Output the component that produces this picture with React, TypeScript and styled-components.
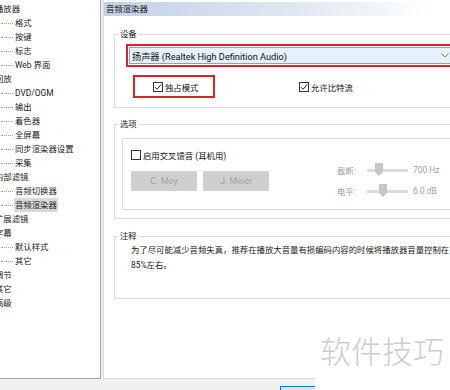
import React from "react";
import styled, { createGlobalStyle } from "styled-components";

const GlobalStyle = createGlobalStyle`
  html, body {
    margin: 0;
    padding: 0;
    background: #f0f0f0;
  }
`;

const FONT = `Roboto, "Noto Sans CJK SC", sans-serif`;

const Window = styled.div`
  position: relative;
  width: 450px;
  height: 390px;
  overflow: hidden;
  background: #f0f0f0;
  display: flex;
  flex-direction: column;
  font-family: ${FONT};
  font-size: 8.4px;
  color: #1a1a1a;
`;

const Body = styled.div`
  display: flex;
  height: 379px;
  flex: none;
`;

const Tree = styled.ul`
  box-sizing: border-box;
  width: 101px;
  flex: none;
  margin: 0;
  padding: 2px 0 0;
  list-style: none;
  background: #fff;
  border-right: 1px solid #a3a3a3;
  border-bottom: 1px solid #a3a3a3;
  overflow: hidden;
`;

const TreeRow = styled.li<{ $child?: boolean }>`
  height: 14px;
  line-height: 14px;
  display: flex;
  align-items: center;
  white-space: nowrap;
  margin-left: ${(p) => (p.$child ? "1px" : "-6px")};
  color: #222;
`;

const Connector = styled.span`
  width: 12px;
  border-top: 1px dotted #9a9a9a;
  margin-right: 1px;
`;

const TreeLabel = styled.span<{ $selected?: boolean }>`
  padding: 0 1px;
  background: ${(p) => (p.$selected ? "#d9d9d9" : "transparent")};
`;

const Main = styled.div`
  box-sizing: border-box;
  flex: 1;
  min-width: 0;
  margin-left: 2px;
  padding-top: 2px;
  display: flex;
  flex-direction: column;
  background: #fff;
  border-left: 1px solid #d6d6d6;
  border-bottom: 1px solid #d6d6d6;
  overflow: hidden;
`;

const PageTitle = styled.div`
  height: 14px;
  line-height: 14px;
  padding-left: 2px;
  color: #111;
  background: linear-gradient(to right, #c2d1e5 0%, #dfe7f1 55%, #ffffff 95%);
`;

const Group = styled.fieldset<{ $gap: number }>`
  box-sizing: border-box;
  flex: none;
  width: 370px;
  margin: ${(p) => p.$gap}px 0 0 10px;
  padding: 0;
  min-width: 0;
  border: 1px solid #dcdcdc;
`;

const Legend = styled.legend`
  margin-left: 4px;
  padding: 0 1px;
  line-height: 14px;
  color: #222;
`;

const GroupBody = styled.div<{ $h: number }>`
  height: ${(p) => p.$h}px;
  padding: 3px 0 0 11px;
  box-sizing: border-box;
`;

const RedFrame = styled.div<{ $w?: number }>`
  box-sizing: border-box;
  border: 2px solid #d9242c;
  padding: 1px;
  height: 23px;
  width: ${(p) => (p.$w ? `${p.$w}px` : "auto")};
  display: flex;
  align-items: center;
`;

const Combo = styled.div`
  flex: 1;
  height: 17px;
  box-sizing: border-box;
  border: 1px solid #7ea6cf;
  background: #e5f1fb;
  display: flex;
  align-items: center;
  justify-content: space-between;
  padding: 0 30px 0 2px;
  color: #111;
  font-size: 9.2px;
`;

const CheckRow = styled.div`
  display: flex;
  align-items: center;
  margin: 8px 0 0 7px;
`;

const CheckItem = styled.label<{ $pad?: number }>`
  display: flex;
  align-items: center;
  gap: 2px;
  padding-left: ${(p) => p.$pad ?? 0}px;
  color: #111;
  white-space: nowrap;
`;

const Box = styled.span`
  width: 10px;
  height: 10px;
  box-sizing: border-box;
  border: 1px solid #333;
  background: #fff;
  display: inline-flex;
  align-items: center;
  justify-content: center;
`;

const Inner = styled.div`
  box-sizing: border-box;
  margin: 4px 0 0 -4px;
  height: 72px;
  border: 1px solid #dcdcdc;
  padding: 10px 0 0 8px;
  display: grid;
  grid-template-columns: 206px auto;
`;

const LeftCol = styled.div`
  display: flex;
  flex-direction: column;
  gap: 10px;
`;

const ButtonRow = styled.div`
  display: flex;
  gap: 6px;
`;

const FlatButton = styled.div`
  width: 66px;
  height: 20px;
  background: #cfcfcf;
  color: #a3a3a3;
  font-size: 9px;
  display: flex;
  align-items: center;
  justify-content: center;
`;

const RightCol = styled.div`
  display: flex;
  flex-direction: column;
  gap: 7px;
  padding-top: 14px;
`;

const SliderRow = styled.div`
  display: flex;
  align-items: center;
  height: 14px;
  color: #a0a0a0;
  white-space: nowrap;
`;

const SliderLabel = styled.span`
  width: 30px;
`;

const Track = styled.div`
  position: relative;
  width: 41px;
  height: 3px;
  background: #dcdcdc;
  margin-right: 5px;
`;

const Thumb = styled.svg<{ $at: number }>`
  position: absolute;
  top: -6px;
  left: ${(p) => p.$at}px;
`;

const NoteText = styled.div`
  padding: 0 0 0 16px;
  line-height: 15px;
  white-space: nowrap;
  color: #222;
`;

const Footer = styled.div`
  flex: 1;
  padding: 7px 0 0 280px;
`;

const OkButton = styled.div`
  width: 70px;
  height: 22px;
  box-sizing: border-box;
  border: 1px solid #0078d7;
  background: #e1e1e1;
`;

const Watermark = styled.div`
  position: absolute;
  right: 0;
  bottom: 0;
  width: 135px;
  height: 58px;
  background: #fff;
  color: #cdcdcd;
  font-family: "Noto Sans CJK SC", sans-serif;
  font-size: 31px;
  font-weight: 300;
  line-height: 36px;
  padding-left: 5px;
  box-sizing: border-box;
`;

const Check = () => (
  <svg width="8" height="8" viewBox="0 0 8 8">
    <path d="M1 4.2 L3.1 6.3 L7.2 1.4" fill="none" stroke="#222" strokeWidth="1" />
  </svg>
);

const Checkbox: React.FC<{ checked?: boolean; label: string; pad?: number }> = ({
  checked,
  label,
  pad,
}) => (
  <CheckItem $pad={pad}>
    <Box>{checked && <Check />}</Box>
    <span>{label}</span>
  </CheckItem>
);

const Slider: React.FC<{ label: string; at: number; value: string }> = ({ label, at, value }) => (
  <SliderRow>
    <SliderLabel>{label}</SliderLabel>
    <Track>
      <Thumb $at={at} width="8" height="13" viewBox="0 0 8 13">
        <path d="M0 0 H8 V9 L4 13 L0 9 Z" fill="#c6c6c6" />
      </Thumb>
    </Track>
    <span>{value}</span>
  </SliderRow>
);

type Node = { label: string; child?: boolean; selected?: boolean };

const nodes: Node[] = [
  { label: "播放器" },
  { label: "格式", child: true },
  { label: "按键", child: true },
  { label: "标志", child: true },
  { label: "Web 界面", child: true },
  { label: "回放" },
  { label: "DVD/OGM", child: true },
  { label: "输出", child: true },
  { label: "着色器", child: true },
  { label: "全屏幕", child: true },
  { label: "同步渲染器设置", child: true },
  { label: "采集", child: true },
  { label: "内部滤镜" },
  { label: "音频切换器", child: true },
  { label: "音频渲染器", child: true, selected: true },
  { label: "扩展滤镜" },
  { label: "字幕" },
  { label: "默认样式", child: true },
  { label: "其它", child: true },
  { label: "调节" },
  { label: "其它" },
  { label: "高级" },
];

export default function App() {
  return (
    <Window>
      <GlobalStyle />
      <Body>
        <Tree>
          {nodes.map((n, i) => (
            <TreeRow key={i} $child={n.child}>
              {n.child && <Connector />}
              <TreeLabel $selected={n.selected}>{n.label}</TreeLabel>
            </TreeRow>
          ))}
        </Tree>
        <Main>
          <PageTitle>音频渲染器</PageTitle>

          <Group $gap={11}>
            <Legend>设备</Legend>
            <GroupBody $h={66}>
              <RedFrame>
                <Combo>
                  <span>扬声器 (Realtek High Definition Audio)</span>
                  <svg width="8" height="5" viewBox="0 0 8 5">
                    <path d="M0.5 0.5 L4 4 L7.5 0.5" fill="none" stroke="#777" strokeWidth="1" />
                  </svg>
                </Combo>
              </RedFrame>
              <CheckRow>
                <RedFrame $w={82}>
                  <Checkbox checked label="独占模式" pad={17} />
                </RedFrame>
                <Checkbox checked label="允许比特流" pad={84} />
              </CheckRow>
            </GroupBody>
          </Group>

          <Group $gap={9}>
            <Legend>选项</Legend>
            <GroupBody $h={87}>
              <Inner>
                <LeftCol>
                  <Checkbox label="启用交叉馈音 (耳机用)" />
                  <ButtonRow>
                    <FlatButton>C. Moy</FlatButton>
                    <FlatButton>J. Meier</FlatButton>
                  </ButtonRow>
                </LeftCol>
                <RightCol>
                  <Slider label="截断:" at={8} value="700 Hz" />
                  <Slider label="电平:" at={12} value="6.0 dB" />
                </RightCol>
              </Inner>
            </GroupBody>
          </Group>

          <Group $gap={10}>
            <Legend>注释</Legend>
            <GroupBody $h={55} style={{ padding: 0 }}>
              <NoteText>
                为了尽可能减少音频失真，推荐在播放大音量有损编码内容的时候将播放器音量控制在
                <br />
                85%左右。
              </NoteText>
            </GroupBody>
          </Group>
        </Main>
      </Body>
      <Footer>
        <OkButton />
      </Footer>
      <Watermark>软件技巧</Watermark>
    </Window>
  );
}
